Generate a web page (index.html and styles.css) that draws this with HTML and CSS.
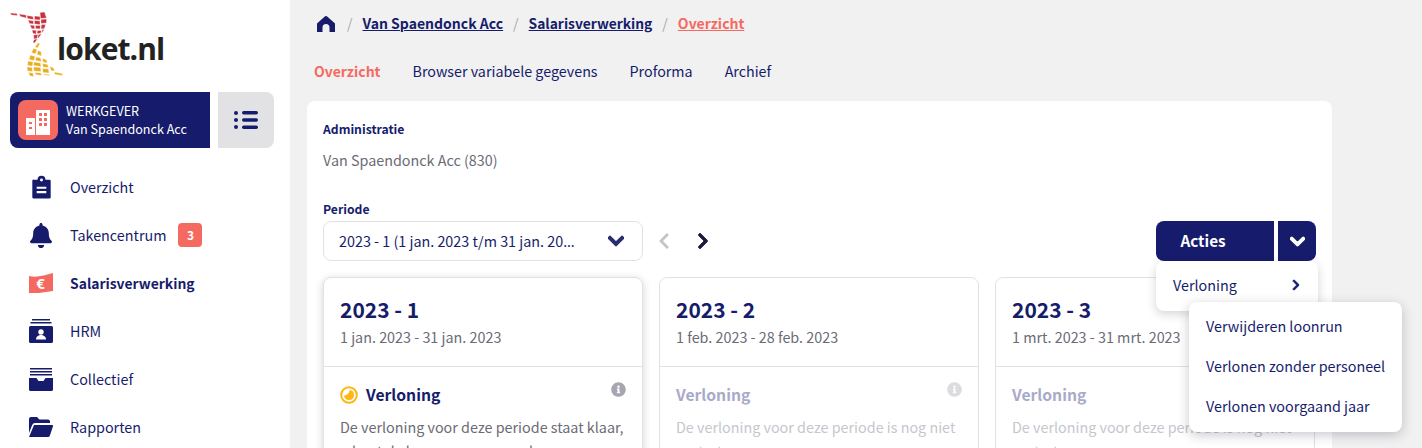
FILE: index.html
```html
<!DOCTYPE html>
<html lang="nl">
<head>
<meta charset="utf-8">
<title>Loket</title>
<link rel="stylesheet" href="styles.css">
</head>
<body>
<div class="app">
  <aside class="sidebar">
    <div class="logo">
      <svg class="logo-mark" viewBox="10 12 56 66" aria-hidden="true">
        <g class="tiles-red">
          <path d="M10 13l7 .5 .5 2-6-.5z"/><path d="M19 14l7 1 .5 3-6-1.500z"/>
          <path d="M27 15.500l6 1 .5 3-6-1z"/><path d="M34.500 16l5.500.5 0 3.500-5.500-.5z"/><path d="M40 12.500l4.500 -.5 2 6-6 .5z"/>
          <path d="M28 20l5.500 1 0 3-4-.5z"/><path d="M34.500 20.500l5.500.5 0 3.500-5.500-.5z"/><path d="M41 19.500l5.500-.5 0 4-5.500.5z"/>
          <path d="M30 25l4.500.5 0 3.500-3-.5z"/><path d="M35.500 25.500l5 0 -.5 3.500-4.500-.5z"/><path d="M41.500 24.500l4 0 -1 4-3.500.5z"/>
          <path d="M32 30l4.500.5 -.5 3.500-3-.5z"/><path d="M37.500 30.500l4 0 -1 3-3.500 0z"/><path d="M42.500 29.500l1.800 0 -2 3-.8 0z"/>
          <path d="M33.500 35l4.500-.5-1 4-3 .5z"/><path d="M38.500 34.500l3-.5-3 4-1 0z"/>
          <path d="M34 39.500l3.500-.5-3 4-1.500-.5z"/>
        </g>
        <g class="tiles-yellow">
          <path d="M38 43l2 .5-2.500 4.500-2.500-1z"/>
          <path d="M33.500 48.500l3.500 1-1.500 4.500-4-1.500z"/><path d="M38 50.500l3 1 .5 4.500-4.500-1.500z"/>
          <path d="M30.500 55l4.500 1.500-1 4-5-1z"/><path d="M36 57l4.500 1 1 3.500-6-1z"/><path d="M42.500 58.500l3.500 1 1.500 3.500-4.500-1z"/>
          <path d="M28 61l5 1-.5 4-5-.5z"/><path d="M34 62l6.500 1 .5 3.500-7.500-1z"/><path d="M42.500 63.500l5 1 1 3-5.500-.5z"/>
          <path d="M27 67l5 .5 .5 4-5 -.5z"/><path d="M33.500 67l7 .5 .5 4-7-.5z"/><path d="M42.500 68.500l6 .5 .5 4-6-.5z"/><path d="M50 66.500l3 1 2 3.500-4-.5z"/>
          <path d="M28.500 72.500l4.500 .5 .5 3.500-3.500-.5z"/><path d="M35 72.500l6 .5 .5 2.500-6-1z"/><path d="M43.500 74l6 .5 .5 1-6 -.5z"/><path d="M54 72l8 1.500 1 2-8-1z"/>
        </g>
      </svg>
      <span class="logo-text">loket.nl</span>
    </div>

    <div class="employer-row">
      <div class="employer">
        <span class="employer-icon">
          <svg viewBox="0 0 24 25" width="24" height="25" aria-hidden="true">
            <path fill="#fff" d="M0 8h9v17H0z"/><path fill="#fff" d="M10 0h14v25H10z"/>
            <g fill="#f56a60"><path d="M3 12h3v2H3zM3 17h3v2H3zM13 3h3v3h-3zM18 3h3v3h-3zM13 8h3v3h-3zM18 8h3v3h-3zM13 13h3v3h-3zM18 13h3v3h-3z"/></g>
          </svg>
        </span>
        <span class="employer-text"><span>WERKGEVER</span><span>Van Spaendonck Acc</span></span>
      </div>
      <button class="list-btn" type="button" aria-label="Menu">
        <svg viewBox="0 0 24 20" width="24" height="20" aria-hidden="true"><g fill="#161c6b"><circle cx="2" cy="3" r="2"/><circle cx="2" cy="10" r="2"/><circle cx="2" cy="17" r="2"/><rect x="8" y="1" width="16" height="3.500" rx="1.700"/><rect x="8" y="8.200" width="16" height="3.500" rx="1.700"/><rect x="8" y="15.500" width="16" height="3.500" rx="1.700"/></g></svg>
      </button>
    </div>

    <nav class="nav">
      <a class="nav-item">
        <span class="nav-icon"><svg viewBox="0 0 24 26" width="21" height="25" aria-hidden="true"><path fill="#161c6b" d="M3 4h4.500a4.500 4.500 0 0 1 9 0H21a3 3 0 0 1 1.500 1v19a1.500 1.500 0 0 1-1.500 1.500H3A1.500 1.500 0 0 1 1.500 24V5A1.500 1.500 0 0 1 3 4z"/><circle cx="12" cy="4.500" r="1.700" fill="#fff"/><path fill="#fff" d="M6.500 12h11v2.500h-11zM6.500 17h11v2.500h-11z"/></svg></span>
        <span>Overzicht</span>
      </a>
      <a class="nav-item">
        <span class="nav-icon"><svg viewBox="0 0 448 512" width="24" height="25" aria-hidden="true"><path fill="#161c6b" d="M224 512c35.320 0 63.970-28.650 63.970-64H160.030c0 35.350 28.650 64 63.970 64zm215.390-149.710c-19.320-20.760-55.470-51.990-55.470-154.290 0-77.700-54.480-139.900-127.940-155.160V32c0-17.670-14.320-32-31.980-32s-31.980 14.330-31.980 32v20.840C118.560 68.100 64.080 130.300 64.080 208c0 102.300-36.150 133.530-55.470 154.290-6 6.450-8.660 14.160-8.610 21.710.11 16.400 12.980 32 32.100 32h383.800c19.120 0 32-15.600 32.100-32 .05-7.550-2.610-15.270-8.610-21.710z"/></svg></span>
        <span>Takencentrum</span>
        <span class="badge">3</span>
      </a>
      <a class="nav-item nav-item-active">
        <span class="nav-icon"><svg viewBox="0 0 24 20" width="24" height="20" aria-hidden="true"><path fill="#f56a60" d="M0 3c8 2 16-1 24-3v18c-8 1-16 3-24 2z"/><text x="11.500" y="15.500" class="euro">€</text></svg></span>
        <span>Salarisverwerking</span>
      </a>
      <a class="nav-item">
        <span class="nav-icon"><svg viewBox="0 0 24 24" width="24" height="24" aria-hidden="true"><g fill="#161c6b"><rect x="3" width="18" height="1.500"/><rect x="1.500" y="3" width="21" height="1.500"/><path d="M1.500 7h21A1.500 1.500 0 0 1 24 8.500v14a1.500 1.500 0 0 1-1.500 1.500h-21A1.500 1.500 0 0 1 0 22.500v-14A1.500 1.500 0 0 1 1.500 7z"/></g><circle cx="12" cy="13" r="2.700" fill="#fff"/><path fill="#fff" d="M7 20.500c0-6 10-6 10 0z"/></svg></span>
        <span>HRM</span>
      </a>
      <a class="nav-item">
        <span class="nav-icon"><svg viewBox="0 0 24 23" width="24" height="23" aria-hidden="true"><g fill="#161c6b"><rect x="1" width="22" height="1.500"/><rect x="1" y="3" width="22" height="1.500"/><rect x="1" y="6" width="22" height="1.500"/><path d="M0 10h7.500l2 3h5l2-3H24v11.500a1.500 1.500 0 0 1-1.500 1.500h-21A1.500 1.500 0 0 1 0 21.500z"/></g></svg></span>
        <span>Collectief</span>
      </a>
      <a class="nav-item">
        <span class="nav-icon"><svg viewBox="0 0 24 20" width="24" height="20" aria-hidden="true"><path fill="#161c6b" d="M0 2a2 2 0 0 1 2-2h6l2.500 2.500H19a2 2 0 0 1 2 2V6H6a3 3 0 0 0-2.800 2L0 16z"/><path fill="#161c6b" d="M5 8h18a1 1 0 0 1 1 1.300l-3.200 9.400a2 2 0 0 1-1.800 1.300H0z"/></svg></span>
        <span>Rapporten</span>
      </a>
    </nav>
  </aside>

  <main class="main">
    <nav class="crumbs">
      <svg class="home" viewBox="0 0 18 16" width="18" height="16" aria-hidden="true"><path fill="#161c6b" d="M9 0c.5 0 1 .3 1.500.7L18 7.500V16h-5.500v-4.500a3.500 3.500 0 0 0-7 0V16H0V7.500L7.500.7C8 .3 8.500 0 9 0z"/></svg>
      <span class="sep sep-first">/</span>
      <a class="crumb">Van Spaendonck Acc</a>
      <span class="sep">/</span>
      <a class="crumb crumb-narrow">Salarisverwerking</a>
      <span class="sep">/</span>
      <a class="crumb crumb-current">Overzicht</a>
    </nav>

    <div class="tabs">
      <a class="tab tab-active">Overzicht</a>
      <a class="tab">Browser variabele gegevens</a>
      <a class="tab">Proforma</a>
      <a class="tab">Archief</a>
    </div>

    <section class="panel">
      <div class="label">Administratie</div>
      <div class="admin-value">Van Spaendonck Acc (830)</div>
      <div class="label period-label">Periode</div>
      <div class="toolbar">
        <div class="select">
          <span class="select-text">2023 - 1 (1 jan. 2023 t/m 31 jan. 20<span class="ellipsis">…</span></span>
          <svg class="select-chevron" viewBox="0 0 448 512" width="16" height="18" aria-hidden="true"><path d="M207.029 381.476L12.686 187.132c-9.373-9.373-9.373-24.569 0-33.941l22.667-22.667c9.357-9.357 24.522-9.375 33.901-.04L224 284.505l154.745-154.021c9.379-9.335 24.544-9.317 33.901.04l22.667 22.667c9.373 9.373 9.373 24.569 0 33.941L240.971 381.476c-9.373 9.372-24.569 9.372-33.942 0z"/></svg>
        </div>
        <svg class="arrow" viewBox="0 0 320 512" width="12" height="18" aria-hidden="true"><path fill="#c4c4c4" d="M34.520 239.030L228.870 44.690c9.370-9.370 24.570-9.370 33.940 0l22.670 22.670c9.360 9.360 9.370 24.520.04 33.900L131.490 256l154.020 154.750c9.340 9.380 9.320 24.540-.04 33.900l-22.670 22.670c-9.370 9.370-24.570 9.370-33.940 0L34.520 272.970c-9.370-9.370-9.370-24.570 0-33.940z"/></svg>
        <svg class="arrow arrow-next" viewBox="0 0 320 512" width="12" height="18" aria-hidden="true"><path d="M285.476 272.971L91.132 467.314c-9.373 9.373-24.569 9.373-33.941 0l-22.667-22.667c-9.357-9.357-9.375-24.522-.04-33.901L188.505 256 34.484 101.255c-9.335-9.379-9.317-24.544.04-33.901l22.667-22.667c9.373-9.373 24.569-9.373 33.941 0L285.475 239.030c9.373 9.372 9.373 24.568.001 33.941z"/></svg>
        <div class="actions">
          <button class="acties" type="button">Acties</button>
          <button class="acties-toggle" type="button" aria-label="Acties openen">
            <svg viewBox="0 0 448 512" width="15" height="17" aria-hidden="true"><path d="M207.029 381.476L12.686 187.132c-9.373-9.373-9.373-24.569 0-33.941l22.667-22.667c9.357-9.357 24.522-9.375 33.901-.04L224 284.505l154.745-154.021c9.379-9.335 24.544-9.317 33.901.04l22.667 22.667c9.373 9.373 9.373 24.569 0 33.941L240.971 381.476c-9.373 9.372-24.569 9.372-33.942 0z"/></svg>
          </button>
          <div class="menu">
            <span>Verloning</span>
            <svg viewBox="0 0 320 512" width="8" height="12" aria-hidden="true"><path d="M285.476 272.971L91.132 467.314c-9.373 9.373-24.569 9.373-33.941 0l-22.667-22.667c-9.357-9.357-9.375-24.522-.04-33.901L188.505 256 34.484 101.255c-9.335-9.379-9.317-24.544.04-33.901l22.667-22.667c9.373-9.373 24.569-9.373 33.941 0L285.475 239.030c9.373 9.372 9.373 24.568.001 33.941z"/></svg>
          </div>
          <div class="submenu">
            <a>Verwijderen loonrun</a>
            <a>Verlonen zonder personeel</a>
            <a>Verlonen voorgaand jaar</a>
          </div>
        </div>
      </div>

      <div class="cards">
        <article class="card card-active">
          <header class="card-head"><h2>2023 - 1</h2><p>1 jan. 2023 - 31 jan. 2023</p></header>
          <div class="card-body">
            <div class="card-title">
              <svg class="status" viewBox="0 0 18 18" width="18" height="18" aria-hidden="true"><circle cx="9" cy="9" r="7.800" fill="none" stroke="#fdb813" stroke-width="2"/><path fill="#fdb813" d="M9.500 4a5 5 0 1 1-5.500 5.500c3 0 5.500-2.500 5.500-5.500z"/></svg>
              <h3>Verloning</h3>
              <svg class="info" viewBox="0 0 512 512" width="15" height="15" aria-hidden="true"><path fill="#a8a5b2" d="M256 8C119.043 8 8 119.083 8 256c0 136.997 111.043 248 248 248s248-111.003 248-248C504 119.083 392.957 8 256 8zm0 110c23.196 0 42 18.804 42 42s-18.804 42-42 42-42-18.804-42-42 18.804-42 42-42zm56 254c0 6.627-5.373 12-12 12h-88c-6.627 0-12-5.373-12-12v-24c0-6.627 5.373-12 12-12h12v-64h-12c-6.627 0-12-5.373-12-12v-24c0-6.627 5.373-12 12-12h64c6.627 0 12 5.373 12 12v100h12c6.627 0 12 5.373 12 12v24z"/></svg>
            </div>
            <p class="card-text">De verloning voor deze periode staat klaar, u kunt de loonrun nu aanmaken en verwerken.</p>
          </div>
        </article>
        <article class="card card-muted">
          <header class="card-head"><h2>2023 - 2</h2><p>1 feb. 2023 - 28 feb. 2023</p></header>
          <div class="card-body">
            <div class="card-title">
              <h3>Verloning</h3>
              <svg class="info" viewBox="0 0 512 512" width="15" height="15" aria-hidden="true"><path fill="#dcdbe0" d="M256 8C119.043 8 8 119.083 8 256c0 136.997 111.043 248 248 248s248-111.003 248-248C504 119.083 392.957 8 256 8zm0 110c23.196 0 42 18.804 42 42s-18.804 42-42 42-42-18.804-42-42 18.804-42 42-42zm56 254c0 6.627-5.373 12-12 12h-88c-6.627 0-12-5.373-12-12v-24c0-6.627 5.373-12 12-12h12v-64h-12c-6.627 0-12-5.373-12-12v-24c0-6.627 5.373-12 12-12h64c6.627 0 12 5.373 12 12v100h12c6.627 0 12 5.373 12 12v24z"/></svg>
            </div>
            <p class="card-text">De verloning voor deze periode is nog niet gestart.</p>
          </div>
        </article>
        <article class="card card-muted">
          <header class="card-head"><h2>2023 - 3</h2><p>1 mrt. 2023 - 31 mrt. 2023</p></header>
          <div class="card-body">
            <div class="card-title"><h3>Verloning</h3></div>
            <p class="card-text">De verloning voor deze periode is nog niet gestart.</p>
          </div>
        </article>
      </div>
    </section>
  </main>
</div>
</body>
</html>
```

FILE: styles.css
```css
* { box-sizing: border-box; }

html, body {
  margin: 0;
  height: 448px;
  overflow: hidden;
}

body {
  font-family: "Noto Sans CJK SC", "Source Sans Pro", "Noto Sans", sans-serif;
  font-size: 14.35px;
  line-height: 20px;
  color: #161c6b;
  background: #f1f1f1;
}

a { color: inherit; }

.app {
  display: flex;
  height: 448px;
}

/* Sidebar */
.sidebar {
  flex: 0 0 290px;
  background: #fff;
  padding: 12px 16px 0 10px;
}

.logo {
  display: flex;
  align-items: flex-end;
  height: 66px;
}

.logo-mark {
  flex: none;
  width: 56px;
  height: 66px;
  margin-right: -9px;
}

.tiles-red, .tiles-yellow {
  stroke: #fff;
  stroke-width: 0.35;
}

.tiles-red { fill: #c8323c; }
.tiles-yellow { fill: #e9ae1e; }

.logo-text {
  font-family: "Open Sans", sans-serif;
  font-size: 30px;
  font-weight: 700;
  line-height: 40px;
  color: #222;
  letter-spacing: -0.9px;
  margin-bottom: 9px;
}

.employer-row {
  display: flex;
  gap: 8px;
  margin-top: 14px;
}

.employer {
  display: flex;
  align-items: center;
  gap: 8px;
  width: 200px;
  height: 56px;
  padding-left: 8px;
  background: #161c6b;
  border-radius: 8px 0 0 8px;
  color: #fff;
}

.employer-icon {
  display: flex;
  align-items: flex-end;
  justify-content: center;
  flex: none;
  width: 40px;
  height: 40px;
  padding-bottom: 5px;
  background: #f56a60;
  border-radius: 8px;
}

.employer-text {
  display: flex;
  flex-direction: column;
  font-size: 12.6px;
  line-height: 18px;
}

.list-btn {
  display: flex;
  align-items: center;
  justify-content: center;
  width: 56px;
  height: 56px;
  padding: 0;
  border: 0;
  background: #e2e1e4;
  border-radius: 0 8px 8px 0;
}

.nav {
  display: flex;
  flex-direction: column;
  margin-top: 15px;
}

.nav-item {
  display: flex;
  align-items: center;
  height: 48px;
}

.nav-icon {
  display: flex;
  justify-content: center;
  flex: none;
  width: 24px;
  margin: 0 17px 0 19px;
}

.nav-item-active {
  font-size: 13.9px;
  font-weight: 700;
}

.euro {
  font-family: "Noto Sans", sans-serif;
  font-size: 15px;
  font-weight: 700;
  fill: #fff;
  text-anchor: middle;
}

.badge {
  display: flex;
  align-items: center;
  justify-content: center;
  width: 24px;
  height: 24px;
  margin-left: 12px;
  background: #f56a60;
  border-radius: 4px;
  color: #fff;
  font-size: 12px;
  font-weight: 700;
}

/* Main */
.main {
  flex: 1;
  min-width: 0;
  padding-left: 17px;
}

.crumbs {
  display: flex;
  align-items: center;
  height: 46px;
  padding-left: 10px;
  font-size: 14px;
  font-weight: 600;
}

.home {
  flex: none;
  margin-top: 2px;
}

.sep {
  margin: 0 10px;
  color: #a9a9a9;
  font-weight: 400;
}

.sep-first { margin-left: 12px; }

.crumb { text-decoration: underline; }
.crumb-narrow { font-size: 13.8px; }
.crumb-current { color: #f56a60; }

.tabs {
  display: flex;
  gap: 32px;
  height: 55px;
  padding: 15px 0 0 7px;
  font-size: 14.3px;
}

.tab-active {
  color: #f56a60;
  font-size: 14px;
  font-weight: 700;
}

.panel {
  width: 1025px;
  height: 500px;
  padding: 18px 16px;
  background: #fff;
  border-radius: 8px;
}

.label {
  font-size: 12.2px;
  font-weight: 600;
}

.admin-value {
  margin-top: 11px;
  color: #6b6b76;
}

.period-label { margin-top: 29px; }

.toolbar {
  display: flex;
  align-items: center;
  margin-top: 2px;
}

.select {
  display: flex;
  align-items: center;
  justify-content: space-between;
  width: 320px;
  height: 40px;
  padding: 0 18px 0 15px;
  border: 1px solid #e2e2e2;
  border-radius: 8px;
}

.select-text {
  white-space: nowrap;
}

.ellipsis {
  font-family: "Noto Sans", sans-serif;
}

.select-chevron { flex: none; }
.select-chevron path { fill: #2a2e6e; stroke: #2a2e6e; stroke-width: 36; }

.arrow { margin-left: 15px; }
.arrow-next { margin-left: 27px; }
.arrow-next path { fill: #1a1c3c; stroke: #1a1c3c; stroke-width: 24; }

.actions {
  position: relative;
  display: flex;
  gap: 4px;
  margin-left: auto;
}

.acties, .acties-toggle {
  height: 40px;
  border: 0;
  background: #161c6b;
  color: #fff;
  font-family: inherit;
}

.acties {
  width: 118px;
  padding: 0 24px 2px 0;
  border-radius: 8px 0 0 8px;
  font-size: 15.3px;
  font-weight: 700;
}

.acties-toggle {
  display: flex;
  align-items: center;
  justify-content: center;
  width: 38px;
  padding: 0;
  border-radius: 0 8px 8px 0;
}

.acties-toggle path { fill: #fff; stroke: #fff; stroke-width: 36; }

.menu {
  position: absolute;
  top: 40px;
  left: 0;
  display: flex;
  align-items: center;
  justify-content: space-between;
  width: 162px;
  height: 50px;
  padding: 0 18px 2px 17px;
  background: #fff;
  border-radius: 8px;
  box-shadow: 0 3px 10px rgba(40, 40, 60, 0.2);
  z-index: 2;
}

.menu path { fill: #161c6b; stroke: #161c6b; stroke-width: 30; }

.submenu {
  position: absolute;
  top: 81px;
  left: 33px;
  display: flex;
  flex-direction: column;
  width: 213px;
  height: 130px;
  padding: 4px 17px;
  background: #fff;
  border-radius: 8px;
  box-shadow: 0 3px 12px rgba(40, 40, 60, 0.25);
  white-space: nowrap;
  z-index: 3;
}

.submenu a {
  display: flex;
  align-items: center;
  height: 40px;
}

.cards {
  display: flex;
  gap: 16px;
  margin-top: 16px;
}

.card {
  width: 320px;
  height: 300px;
  background: #fff;
  border: 1px solid #e2e2e2;
  border-radius: 8px;
}

.card-active {
  box-shadow: 0 2px 8px rgba(40, 40, 60, 0.2);
}

.card-head {
  height: 89px;
  padding: 16px 16px 0;
  border-bottom: 1px solid #e2e2e2;
}

.card-head h2 {
  margin: 0;
  font-size: 21px;
  font-weight: 600;
  line-height: 30px;
}

.card-head p {
  margin: 3px 0 0;
  color: #6b6b76;
}

.card-body { padding: 18px 16px 0; }

.card-title {
  display: flex;
  align-items: center;
  height: 20px;
}

.card-title h3 {
  margin: 0;
  font-size: 15.7px;
  font-weight: 600;
  line-height: 20px;
}

.status { margin-right: 8px; }

.info {
  margin: -12px 0 0 auto;
}

.card-text {
  margin: 10px 0 0;
  line-height: 24px;
  color: #6b6b76;
}

.card-muted .card-title h3 { color: #a9aac8; }
.card-muted .card-text { color: #c6c6cc; }
```
